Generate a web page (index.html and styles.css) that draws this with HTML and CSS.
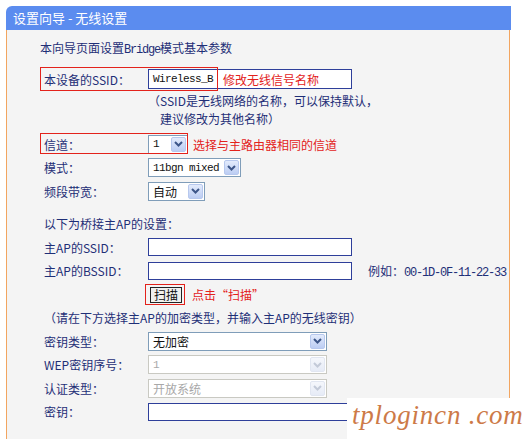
FILE: index.html
```html
<!DOCTYPE html>
<html lang="zh-CN">
<head>
  <meta charset="UTF-8" />
  <title>设置向导 - 无线设置</title>
  <link rel="stylesheet" href="styles.css">
</head>
<body>
  <div class="wizard">
    <div class="wizard-head">设置向导 - 无线设置</div>
    <div class="wizard-body">
      <p class="intro">本向导页面设置<span class="mono-t">Bridge</span>模式基本参数</p>

      <div class="row row-ssid">
        <span class="mark mark-ssid"></span>
        <span class="label">本设备的SSID：</span>
        <div class="input input-wide">
          <span class="mono">Wireless_B</span>
          <span class="hint hint-in">修改无线信号名称</span>
        </div>
      </div>
      <p class="note">（SSID是无线网络的名称，可以保持默认，</p>
      <p class="note note-2">建议修改为其他名称）</p>

      <div class="row row-channel">
        <span class="mark mark-channel"></span>
        <span class="label">信道：</span>
        <div class="select sel-channel">
          <span class="val mono">1</span>
          <span class="arrow"><svg width="9" height="6" viewBox="0 0 9 6"><polyline points="1,1 4.5,4.5 8,1" fill="none" stroke="#3d5689" stroke-width="2"/></svg></span>
        </div>
        <span class="hint">选择与主路由器相同的信道</span>
      </div>

      <div class="row row-odd">
        <span class="label">模式：</span>
        <div class="select sel-mode">
          <span class="val mono">11bgn mixed</span>
          <span class="arrow"><svg width="9" height="6" viewBox="0 0 9 6"><polyline points="1,1 4.5,4.5 8,1" fill="none" stroke="#3d5689" stroke-width="2"/></svg></span>
        </div>
      </div>

      <div class="row">
        <span class="label">频段带宽：</span>
        <div class="select sel-band">
          <span class="val">自动</span>
          <span class="arrow"><svg width="9" height="6" viewBox="0 0 9 6"><polyline points="1,1 4.5,4.5 8,1" fill="none" stroke="#3d5689" stroke-width="2"/></svg></span>
        </div>
      </div>

      <div class="row row-section">
        <span>以下为桥接主AP的设置：</span>
      </div>

      <div class="row">
        <span class="label">主AP的SSID：</span>
        <div class="input input-wide"></div>
      </div>

      <div class="row row-odd">
        <span class="label">主AP的BSSID：</span>
        <div class="input input-wide"></div>
        <span class="example">例如：<span class="mono-t">00-1D-0F-11-22-33</span></span>
      </div>

      <div class="row">
        <span class="label"></span>
        <span class="scan-mark"><button class="btn-scan">扫描</button></span>
        <span class="hint hint-scan">点击“扫描”</span>
      </div>

      <div class="row row-odd">
        <span>（请在下方选择主AP的加密类型，并输入主AP的无线密钥）</span>
      </div>

      <div class="row">
        <span class="label">密钥类型：</span>
        <div class="select sel-key">
          <span class="val">无加密</span>
          <span class="arrow"><svg width="9" height="6" viewBox="0 0 9 6"><polyline points="1,1 4.5,4.5 8,1" fill="none" stroke="#3d5689" stroke-width="2"/></svg></span>
        </div>
      </div>

      <div class="row row-odd">
        <span class="label">WEP密钥序号：</span>
        <div class="select sel-key disabled">
          <span class="val mono">1</span>
          <span class="arrow"><svg width="9" height="6" viewBox="0 0 9 6"><polyline points="1,1 4.5,4.5 8,1" fill="none" stroke="#c3cad8" stroke-width="2"/></svg></span>
        </div>
      </div>

      <div class="row">
        <span class="label">认证类型：</span>
        <div class="select sel-key disabled">
          <span class="val">开放系统</span>
          <span class="arrow"><svg width="9" height="6" viewBox="0 0 9 6"><polyline points="1,1 4.5,4.5 8,1" fill="none" stroke="#c3cad8" stroke-width="2"/></svg></span>
        </div>
      </div>

      <div class="row row-odd">
        <span class="label">密钥：</span>
        <div class="input input-wide"></div>
      </div>
    </div>
  </div>

  <div class="watermark">tplogincn .com</div>
</body>
</html>
```

FILE: styles.css
```css
:root {
  --navy: #1f2f77;
  --red: #e3221b;
  --orange: #f2a560;
  --head: #5b8cef;
  --panel: #f4f4f4;
}

html, body {
  margin: 0;
  padding: 0;
  background: #fff;
  font-family: "Noto Sans CJK SC", sans-serif;
  font-size: 12px;
  color: var(--navy);
}

.wizard {
  margin: 6px 13px 0 6px;
}

.wizard-head {
  height: 24px;
  line-height: 24px;
  padding-left: 7px;
  background: var(--head);
  color: #fff;
  font-size: 13px;
  border-radius: 6px 0 0 0;
}

.wizard-body {
  position: relative;
  box-sizing: border-box;
  height: 409px;
  padding: 6px 0 0 37px;
  background: var(--panel);
  border-left: 1px solid var(--orange);
  border-right: 1px solid var(--orange);
  margin-right: 1px;
}

.intro {
  margin: 0 0 0 -4px;
  height: 24px;
  line-height: 24px;
}

.row {
  position: relative;
  display: flex;
  align-items: center;
  height: 24px;
}

.row-odd {
  height: 23px;
}

.label {
  width: 104px;
  flex: none;
}

.row-ssid {
  margin-top: 7px;
}

.row-channel {
  margin-top: 4px;
}

.row-section {
  margin-top: 8px;
}

.note {
  margin: 0;
  height: 18px;
  line-height: 18px;
  padding-left: 104px;
}

.row-ssid + .note {
  margin-top: 1px;
}

.note-2 {
  padding-left: 116px;
}

/* red annotation frames drawn over the form */
.mark {
  position: absolute;
  border: 1px solid var(--red);
  box-sizing: border-box;
}

.mark-ssid {
  left: -4px;
  top: 0;
  width: 178px;
  height: 24px;
}

.mark-channel {
  left: -4px;
  top: 1px;
  width: 148px;
  height: 21px;
}

.hint {
  color: var(--red);
}

.hint-in {
  margin-left: 10px;
}

.row-channel .hint {
  margin-left: 5px;
}

.mono {
  font-family: "Liberation Mono", monospace;
  font-size: 11px;
  letter-spacing: -0.6px;
  color: #111;
}

.mono-t {
  font-family: "Liberation Mono", monospace;
  font-size: 12px;
  letter-spacing: -1.2px;
}

.input {
  display: flex;
  align-items: center;
  box-sizing: border-box;
  height: 18px;
  padding-left: 4px;
  background: #fff;
  border: 1px solid #2e3f9a;
}

.input-wide {
  width: 204px;
}

.row-ssid .input {
  height: 20px;
}

.select {
  display: flex;
  align-items: center;
  box-sizing: border-box;
  height: 19px;
  background: #fff;
  border: 1px solid #7f9db9;
}

.select .val {
  flex: 1;
  padding-left: 4px;
  color: #111;
}

.select .arrow {
  flex: none;
  display: flex;
  align-items: center;
  justify-content: center;
  width: 15px;
  height: 15px;
  margin-right: 1px;
  box-sizing: border-box;
  border: 1px solid #b7c8ee;
  border-radius: 2px;
  background: linear-gradient(#e3ebfc, #bccdf3);
}

.sel-channel { width: 40px; }
.sel-mode { width: 93px; }
.sel-band { width: 57px; }
.sel-key { width: 179px; }

.select.disabled {
  border-color: #c9c9c2;
}

.select.disabled .val {
  color: #a8a8a8;
}

.select.disabled .arrow {
  border-color: #e1e6f1;
  background: linear-gradient(#f5f7fc, #e6ebf6);
}

.example {
  margin-left: 16px;
}

.scan-mark {
  display: inline-flex;
  margin-left: -3px;
  padding: 2px 2px 1px 4px;
  border: 1px solid var(--red);
}

.btn-scan {
  height: 16px;
  width: 32px;
  padding: 0;
  font-family: "Noto Sans CJK SC", sans-serif;
  font-size: 12px;
  line-height: 14px;
  color: #111;
  background: #f0f0ee;
  border: 1px solid #222;
  border-radius: 0;
}

.hint-scan {
  margin-left: 7px;
}

.watermark {
  position: absolute;
  left: 347px;
  top: 398px;
  width: 177px;
  height: 41px;
  box-sizing: border-box;
  padding-left: 5px;
  background: #fff;
  color: #cd7a48;
  font-family: "Liberation Serif", serif;
  font-style: italic;
  font-size: 27px;
  line-height: 34px;
  letter-spacing: 0.8px;
  white-space: nowrap;
}
```
